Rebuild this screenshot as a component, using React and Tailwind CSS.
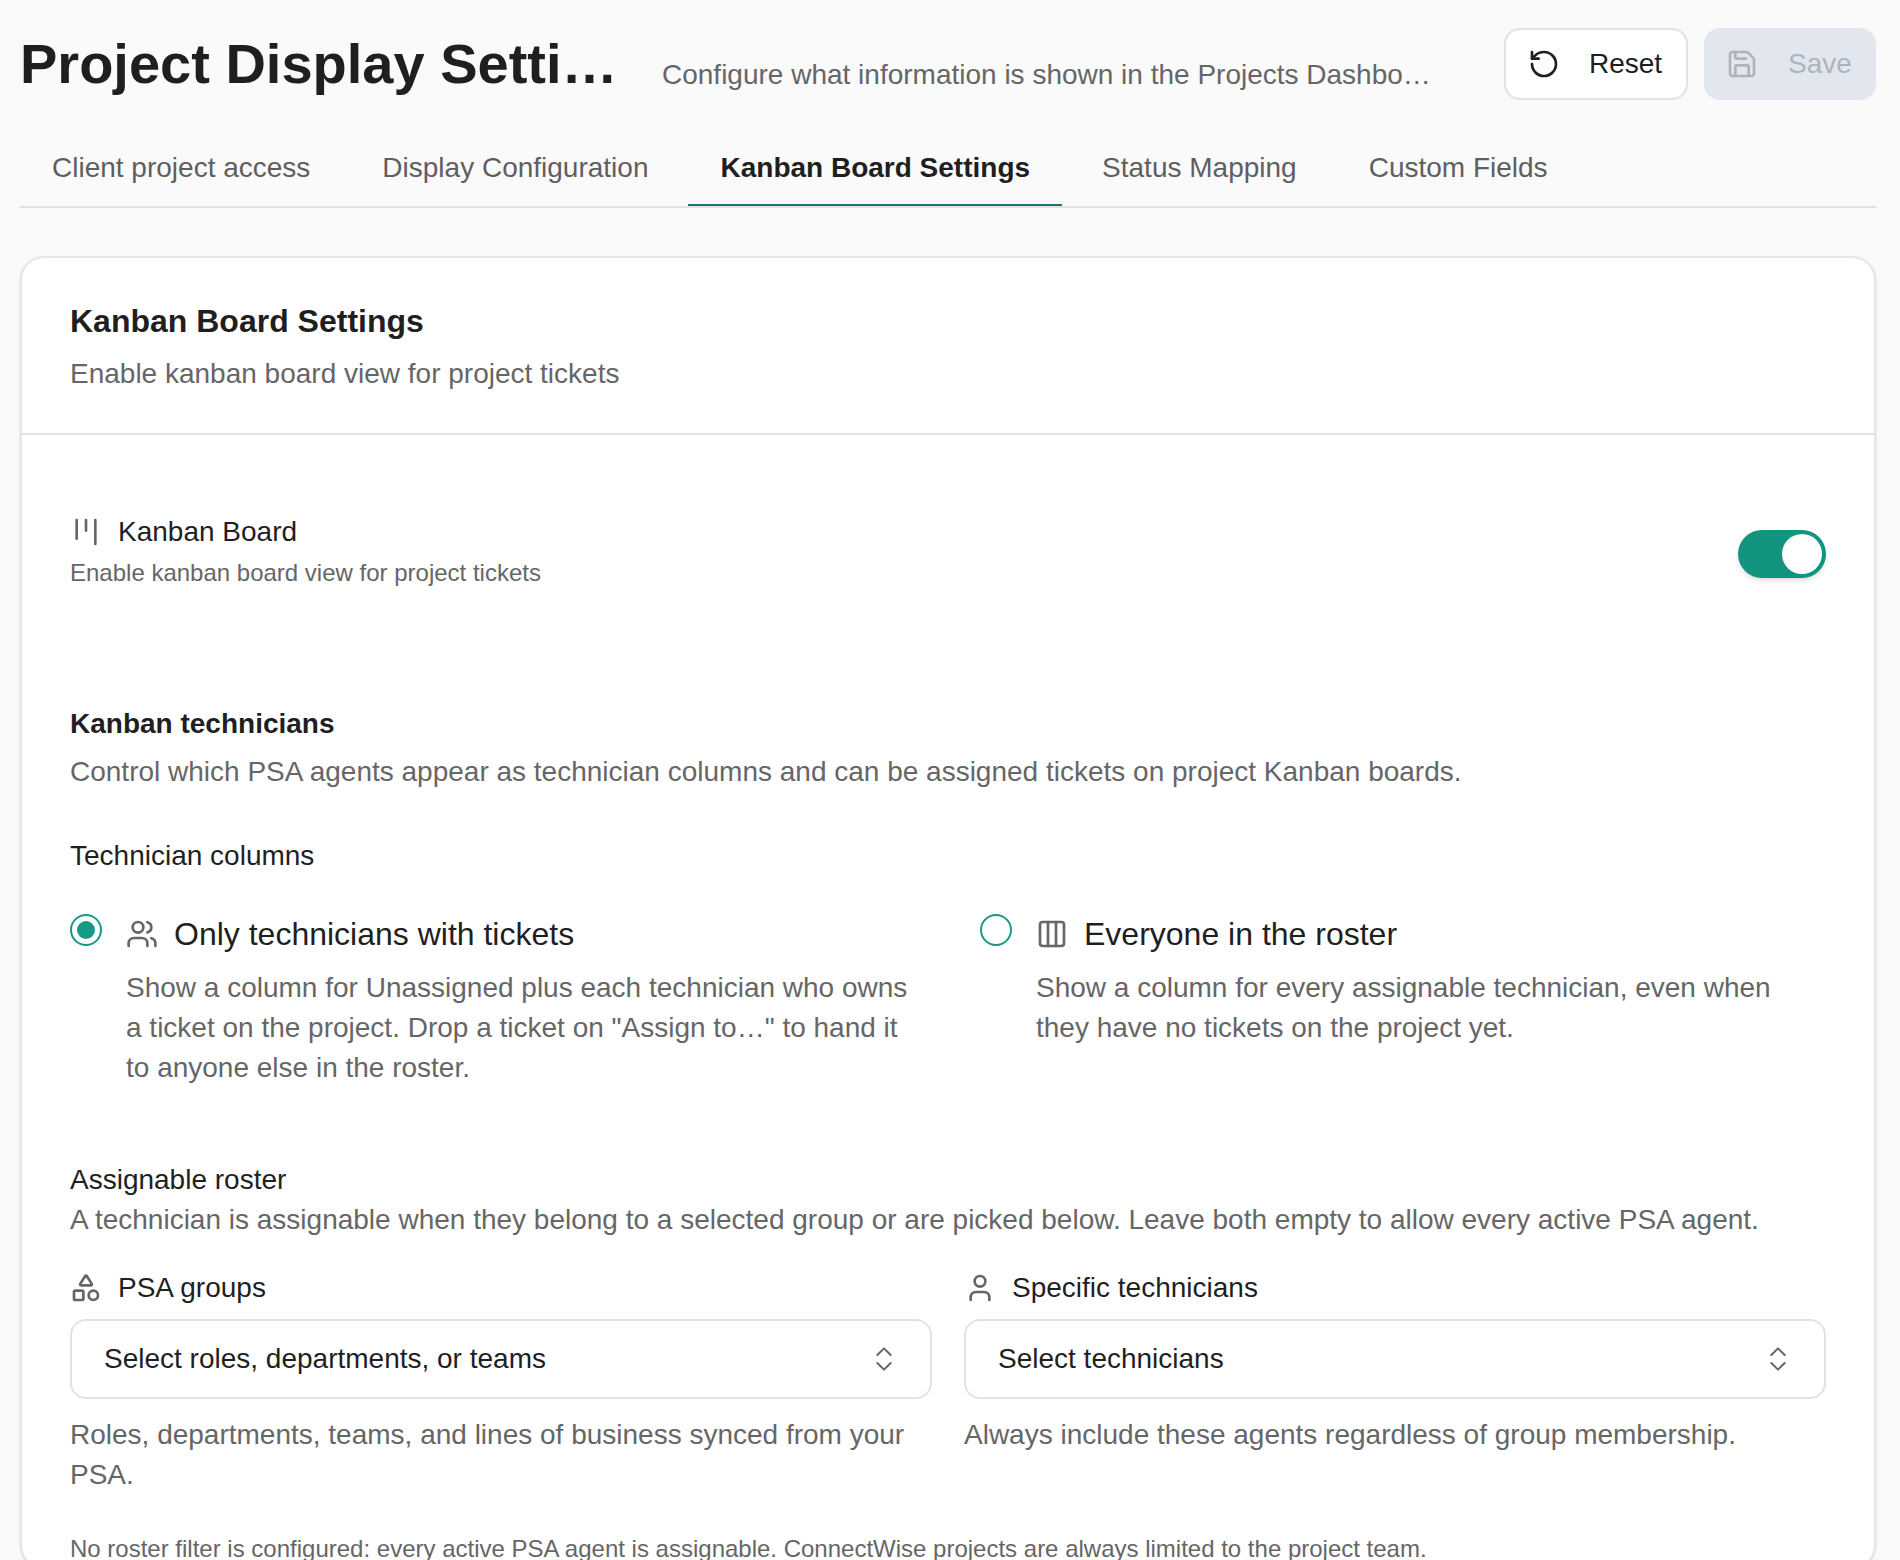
import React from "react";
import { RotateCcw, Save, Kanban, Users, Columns3, Shapes, User, ChevronsUpDown } from "lucide-react";

function Tab({ label, active }) {
  return (
    <div className={"h-[78px] px-[32px] pt-[20px] text-[28px] leading-[40px] border-b-2 " + (active ? "font-bold text-[#1f1f1f] border-[#14786a]" : "text-[#5f5f5f] border-transparent")}>
      {label}
    </div>
  );
}

function RadioOption({ checked, icon, title, lines }) {
  return (
    <div className="flex gap-[24px]">
      <div className="w-[32px] h-[32px] mt-[-2px] rounded-full border-2 border-[#179a85] flex items-center justify-center shrink-0">
        {checked && <div className="w-[18px] h-[18px] rounded-full bg-[#179a85]" />}
      </div>
      <div className="min-w-0">
        <div className="flex items-center gap-[16px] h-[36px] text-[32px] leading-[40px] text-[#1f1f1f]">
          <span className="text-[#666666]">{icon}</span>
          <span>{title}</span>
        </div>
        <p className="mt-[16px] text-[28px] leading-[40px] text-[#666666]">{lines}</p>
      </div>
    </div>
  );
}

function SelectField({ icon, label, placeholder, help }) {
  return (
    <div className="min-w-0">
      <div className="flex items-center gap-[16px] h-[40px] text-[28px] leading-[40px] text-[#1f1f1f]">
        <span className="text-[#666666]">{icon}</span>
        <span>{label}</span>
      </div>
      <div className="mt-[11px] h-[80px] rounded-[16px] border-2 border-[#e2e2e2] bg-white px-[32px] flex items-center justify-between text-[28px] text-[#1f1f1f]">
        <span>{placeholder}</span>
        <ChevronsUpDown size={32} strokeWidth={1.5} className="text-[#666666] -mr-[2px]" />
      </div>
      <p className="mt-[16px] text-[28px] leading-[40px] text-[#666666]">{help}</p>
    </div>
  );
}

export default function App() {
  return (
    <div className="h-[1560px] overflow-hidden bg-[#fafafa] pl-[20px] pr-[24px] font-['Liberation_Sans',Arial,sans-serif]">
      <header className="flex items-center h-[128px]">
        <div className="flex items-baseline min-w-0 flex-1 gap-[42px]">
          <h1 className="w-[600px] shrink-0 truncate text-[56px] leading-[64px] font-bold text-[#1f1f1f]">Project Display Settings</h1>
          <p className="min-w-0 flex-1 truncate text-[28px] leading-[40px] text-[#666666] translate-y-[1px]">Configure what information is shown in the Projects Dashboard and client portal</p>
        </div>
        <div className="flex gap-[16px] ml-[58px] shrink-0">
          <button className="h-[72px] w-[184px] rounded-[16px] border-2 border-[#e2e2e2] bg-white flex items-center pl-[22px] text-[28px] text-[#1f1f1f]">
            <RotateCcw size={32} strokeWidth={2} />
            <span className="ml-[29px]">Reset</span>
          </button>
          <button className="h-[72px] w-[172px] rounded-[16px] bg-[#e2e7ef] flex items-center pl-[22px] text-[28px] text-[#aeb4bd]">
            <Save size={32} strokeWidth={2} />
            <span className="ml-[30px]">Save</span>
          </button>
        </div>
      </header>

      <nav className="flex gap-[8px] border-b-2 border-[#e2e2e2] h-[80px] items-start">
        <Tab label="Client project access" />
        <Tab label="Display Configuration" />
        <Tab label="Kanban Board Settings" active />
        <Tab label="Status Mapping" />
        <Tab label="Custom Fields" />
      </nav>

      <section className="mt-[48px] rounded-[24px] border-2 border-[#e6e6e6] bg-white shadow-sm">
        <div className="h-[177px] px-[48px] pt-[41px] border-b-2 border-[#e2e2e2]">
          <h2 className="text-[32px] leading-[44px] font-bold text-[#1f1f1f]">Kanban Board Settings</h2>
          <p className="mt-[9px] text-[28px] leading-[44px] text-[#666666]">Enable kanban board view for project tickets</p>
        </div>

        <div className="px-[48px] pt-[77px]">
          <div className="flex items-start justify-between">
            <div>
              <div className="flex items-center gap-[16px] h-[40px] text-[28px] leading-[40px] text-[#1f1f1f]">
                <Kanban size={32} strokeWidth={2} className="text-[#666666]" />
                <span>Kanban Board</span>
              </div>
              <p className="mt-[5px] text-[24px] leading-[32px] text-[#666666]">Enable kanban board view for project tickets</p>
            </div>
            <div className="mt-[18px] w-[88px] h-[48px] rounded-full bg-[#12947f] p-[4px] flex justify-end shadow-md">
              <div className="w-[40px] h-[40px] rounded-full bg-white" />
            </div>
          </div>

          <h3 className="mt-[115px] text-[28px] leading-[40px] font-bold text-[#1f1f1f]">Kanban technicians</h3>
          <p className="mt-[8px] text-[28px] leading-[40px] text-[#666666]">Control which PSA agents appear as technician columns and can be assigned tickets on project Kanban boards.</p>

          <div className="mt-[44px] text-[28px] leading-[40px] text-[#1f1f1f]">Technician columns</div>

          <div className="mt-[40px] grid grid-cols-2 gap-[64px]">
            <RadioOption
              checked
              icon={<Users size={32} strokeWidth={2} />}
              title="Only technicians with tickets"
              lines={'Show a column for Unassigned plus each technician who owns a ticket on the project. Drop a ticket on "Assign to…" to hand it to anyone else in the roster.'}
            />
            <RadioOption
              icon={<Columns3 size={32} strokeWidth={2} />}
              title="Everyone in the roster"
              lines="Show a column for every assignable technician, even when they have no tickets on the project yet."
            />
          </div>

          <div className="mt-[72px] text-[28px] leading-[40px] text-[#1f1f1f]">Assignable roster</div>
          <p className="text-[28px] leading-[40px] text-[#666666]">A technician is assignable when they belong to a selected group or are picked below. Leave both empty to allow every active PSA agent.</p>

          <div className="mt-[28px] grid grid-cols-2 gap-[32px]">
            <SelectField
              icon={<Shapes size={32} strokeWidth={2} />}
              label="PSA groups"
              placeholder="Select roles, departments, or teams"
              help="Roles, departments, teams, and lines of business synced from your PSA."
            />
            <SelectField
              icon={<User size={32} strokeWidth={2} />}
              label="Specific technicians"
              placeholder="Select technicians"
              help="Always include these agents regardless of group membership."
            />
          </div>

          <p className="mt-[36px] text-[24px] leading-[36px] text-[#666666]">No roster filter is configured: every active PSA agent is assignable. ConnectWise projects are always limited to the project team.</p>
        </div>
      </section>
    </div>
  );
}
